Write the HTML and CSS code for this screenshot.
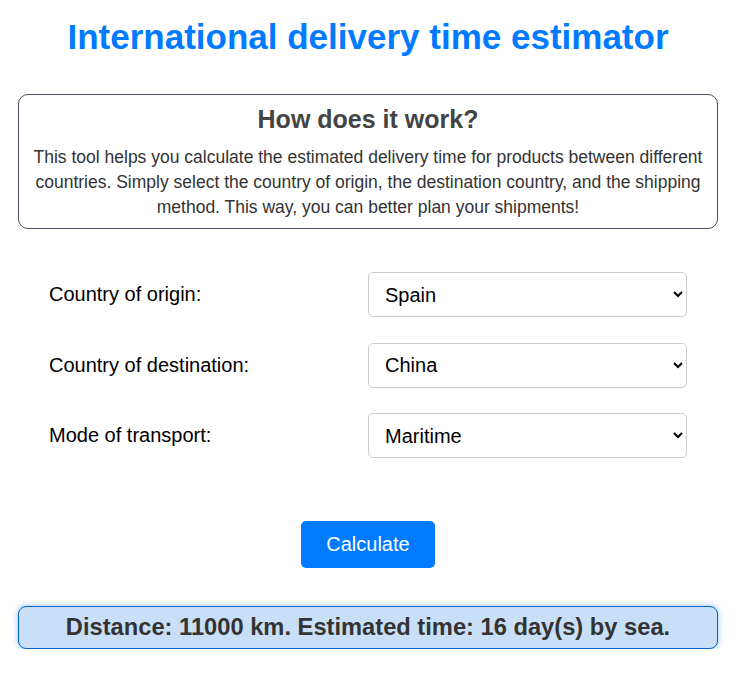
FILE: index.html
```html
<!DOCTYPE html>
<html lang="en">
<head>
<meta charset="utf-8">
<title>International delivery time estimator</title>
<link rel="stylesheet" href="styles.css">
</head>
<body>
<div class="container">
  <h1 class="title">International delivery time estimator</h1>
  <section class="info">
    <h2 class="info-title">How does it work?</h2>
    <p class="info-text">This tool helps you calculate the estimated delivery time for products between different countries. Simply select the country of origin, the destination country, and the shipping method. This way, you can better plan your shipments!</p>
  </section>
  <form class="form">
    <div class="row">
      <label class="label" for="origin">Country of origin:</label>
      <select class="select" id="origin"><option>Spain</option></select>
    </div>
    <div class="row">
      <label class="label" for="dest">Country of destination:</label>
      <select class="select" id="dest"><option>China</option></select>
    </div>
    <div class="row">
      <label class="label" for="mode">Mode of transport:</label>
      <select class="select" id="mode"><option>Maritime</option></select>
    </div>
  </form>
  <div class="actions">
    <button class="btn" type="button">Calculate</button>
  </div>
  <div class="result">Distance: 11000 km. Estimated time: 16 day(s) by sea.</div>
</div>
</body>
</html>
```
FILE: styles.css
```css
* { box-sizing: border-box; }
body {
  margin: 0;
  background: #fff;
  font-family: "Liberation Sans", Arial, sans-serif;
  color: #333;
}
.container {
  padding: 0 18px;
}
.title {
  margin: 17px 0 37px;
  font-size: 35px;
  line-height: 40px;
  font-weight: bold;
  color: #007bff;
  text-align: center;
}
.info {
  border: 1px solid #4a5160;
  border-radius: 10px;
  padding: 10px 12px 8px;
  text-align: center;
}
.info-title {
  margin: 0 0 12px;
  font-size: 25px;
  line-height: 28px;
  color: #444;
}
.info-text {
  margin: 0;
  font-size: 17.5px;
  line-height: 25px;
  color: #333;
}
.form {
  display: flex;
  flex-direction: column;
  gap: 25.5px;
  padding: 0 31px;
  margin-top: 43px;
}
.row {
  display: grid;
  grid-template-columns: 1fr 1fr;
  align-items: center;
}
.label {
  font-size: 20px;
  color: #000;
}
.select {
  height: 45px;
  font-family: "Liberation Sans", Arial, sans-serif;
  font-size: 20px;
  color: #000;
  background: #fff;
  border: 1px solid #ccc;
  border-radius: 5px;
  padding: 0 11px 0 12px;
}
.actions {
  display: flex;
  justify-content: center;
  margin-top: 63px;
}
.btn {
  font-family: "Liberation Sans", Arial, sans-serif;
  font-size: 20px;
  color: #fff;
  background: #007bff;
  border: none;
  border-radius: 5px;
  padding: 12px 25px;
  line-height: 23px;
}
.result {
  margin-top: 38px;
  background: #c8dff7;
  border: 1px solid #0062cc;
  border-radius: 8px;
  box-shadow: 0 0 6px rgba(0, 123, 255, 0.45);
  padding: 7px 10px;
  text-align: center;
  font-size: 23.7px;
  line-height: 27px;
  font-weight: bold;
  color: #333;
}
```
